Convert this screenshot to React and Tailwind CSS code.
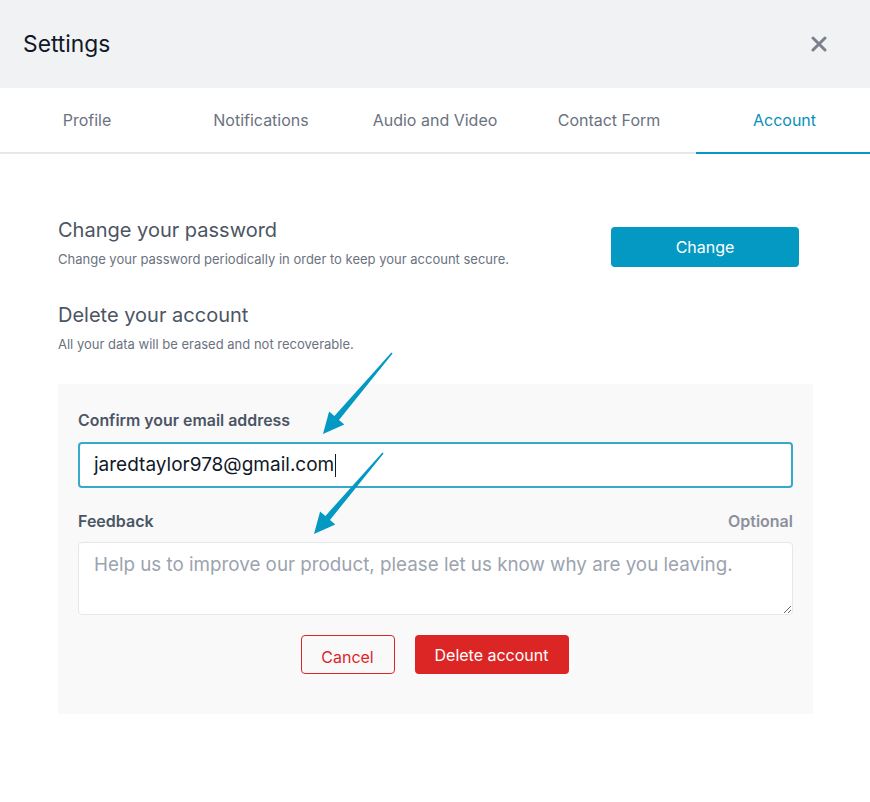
import React from 'react';

const tabs = ['Profile', 'Notifications', 'Audio and Video', 'Contact Form', 'Account'];

function Arrows() {
  // two pointer arrows drawn over the form
  const arrow = 'M392.6 353.5 L339 419.9 L344.3 424.4 L323 434 L329.1 411.4 L334.4 416 L391.4 352.5 Z';
  return (
    <svg className="absolute left-0 top-0 pointer-events-none" width="870" height="802" viewBox="0 0 870 802">
      <path d={arrow} fill="#0399c3" />
      <path d={arrow} fill="#0399c3" transform="translate(-9 100)" />
    </svg>
  );
}

export default function App() {
  return (
    <div className="relative w-[870px] h-[802px] bg-white font-['Inter',sans-serif]">
      <div className="h-[88px] bg-[#f1f2f4] flex items-center justify-between pl-[23px] pr-[43px]">
        <h1 className="text-[22.8px] text-[#111827] leading-none">Settings</h1>
        <svg width="16" height="16" viewBox="0 0 16 16">
          <path d="M2 2 L14 14 M14 2 L2 14" stroke="#7b808b" strokeWidth="3" strokeLinecap="round" />
        </svg>
      </div>

      <div className="grid grid-cols-5 h-[66px] border-b-2 border-[#e5e7eb]">
        {tabs.map(t => (
          <div
            key={t}
            className={
              t === 'Account'
                ? 'flex items-center justify-center text-[16px] text-[#0a8fb8] border-b-2 border-[#0399c3] -mb-[2px] pl-[3px]'
                : 'flex items-center justify-center text-[16px] text-[#6b7280]'
            }
          >
            {t}
          </div>
        ))}
      </div>

      <div className="pl-[58px] pr-[57px] pt-[62px]">
        <div className="flex items-end justify-between pr-[14px]">
          <div>
            <h2 className="text-[20px] leading-[28px] text-[#4b5563]">Change your password</h2>
            <p className="text-[13px] leading-[20px] text-[#6b7280] mt-[5px]">
              Change your password periodically in order to keep your account secure.
            </p>
          </div>
          <button className="w-[188px] h-[40px] mb-[2px] rounded-[4px] bg-[#0399c3] text-white text-[16px]">
            Change
          </button>
        </div>

        <h2 className="text-[20px] leading-[28px] text-[#4b5563] mt-[32px]">Delete your account</h2>
        <p className="text-[13px] leading-[20px] text-[#6b7280] mt-[5px]">All your data will be erased and not recoverable.</p>

        <div className="mt-[30px] bg-[#f9f9fa] px-5 pt-[26px] pb-[40px]">
          <label className="block text-[15.9px] leading-[22px] font-semibold text-[#4b5563]">Confirm your email address</label>
          <div className="mt-[10px] h-[46px] border-2 border-[#37a9cb] rounded-[4px] bg-white flex items-center pl-[14px] text-[19px] text-[#111827]">
            jaredtaylor978@gmail.com
            <span className="inline-block w-px h-[23px] bg-[#111827] ml-px" />
          </div>

          <div className="mt-[22px] flex justify-between text-[16px] leading-[22px] font-semibold">
            <span className="text-[#4b5563]">Feedback</span>
            <span className="text-[#8b919b]">Optional</span>
          </div>
          <textarea
            className="mt-[10px] block w-full h-[73px] border border-[#e5e7eb] rounded-[4px] bg-white px-[15px] pt-[9px] text-[18.8px] leading-[26px] text-[#111827] placeholder:text-[#9ca3af] outline-none"
            placeholder="Help us to improve our product, please let us know why are you leaving."
          />

          <div className="mt-[20px] flex justify-center gap-5 pr-[2px]">
            <button className="w-[94px] h-[39px] rounded-[4px] border border-[#dc2626] text-[#dc2626] text-[16px] pt-[5px]">
              Cancel
            </button>
            <button className="w-[154px] h-[39px] rounded-[4px] bg-[#dc2626] text-white text-[16px]">
              Delete account
            </button>
          </div>
        </div>
      </div>

      <Arrows />
    </div>
  );
}
